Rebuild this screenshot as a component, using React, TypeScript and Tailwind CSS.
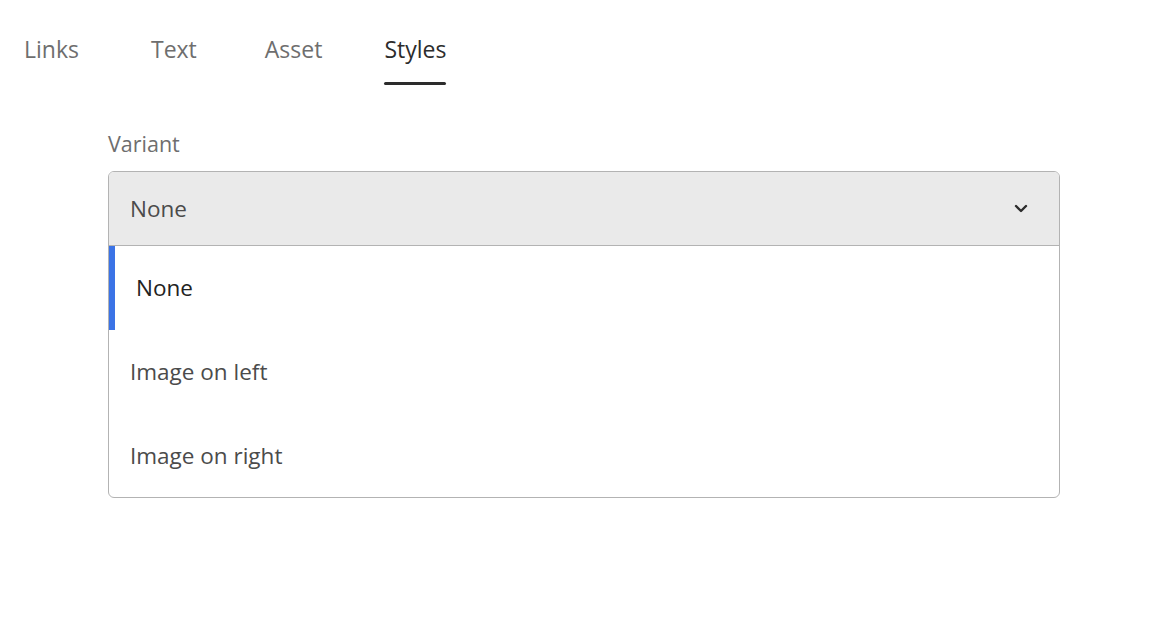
import React from "react";

export default function App() {
  const tabs = [
    { t: "Links", mr: "mr-[72px]" },
    { t: "Text", mr: "mr-[68px]" },
    { t: "Asset", mr: "mr-[62px]" },
    { t: "Styles", mr: "" },
  ];
  return (
    <div className="w-[1164px] h-[638px] bg-white" style={{ fontFamily: '"Open Sans", "Noto Sans", sans-serif' }}>
      <div className="flex pl-[24px] pt-[30px]">
        {tabs.map(({ t, mr }) => (
          <div key={t} className={`flex flex-col ${mr}`}>
            <div className={`text-[23px] leading-[38px] ${t === "Styles" ? "text-[#2c2c2c]" : "text-[#6e6e6e]"}`}>{t}</div>
            <div className={`h-[3px] mt-[14px] rounded-full ${t === "Styles" ? "bg-[#2c2c2c]" : "bg-transparent"}`} />
          </div>
        ))}
      </div>
      <div className="ml-[108px] w-[952px] mt-[44px]">
        <div className="text-[21.5px] leading-[30px] text-[#6e6e6e]">Variant</div>
        <div className="mt-[12px] border-[1.5px] border-[#b3b3b3] rounded-[6px] overflow-hidden">
          <div className="h-[74px] bg-[#eaeaea] flex items-center justify-between pl-[21px] pr-[31px] border-b-[1.5px] border-[#b3b3b3]">
            <span className="text-[22.5px] text-[#4b4b4b]">None</span>
            <svg width="14" height="9" viewBox="0 0 14 9" fill="none">
              <path d="M2 2L7 7L12 2" stroke="#2c2c2c" strokeWidth="2.4" strokeLinecap="round" strokeLinejoin="round" />
            </svg>
          </div>
          <div className="flex h-[84px] items-center">
            <div className="w-[6px] h-full bg-[#3b73e6]" />
            <span className="pl-[21px] text-[22.5px] text-[#222222]">None</span>
          </div>
          <div className="flex h-[84px] items-center pl-[21px]">
            <span className="text-[22.5px] text-[#4b4b4b]">Image on left</span>
          </div>
          <div className="flex h-[83px] items-center pl-[21px]">
            <span className="text-[22.5px] text-[#4b4b4b]">Image on right</span>
          </div>
        </div>
      </div>
    </div>
  );
}
